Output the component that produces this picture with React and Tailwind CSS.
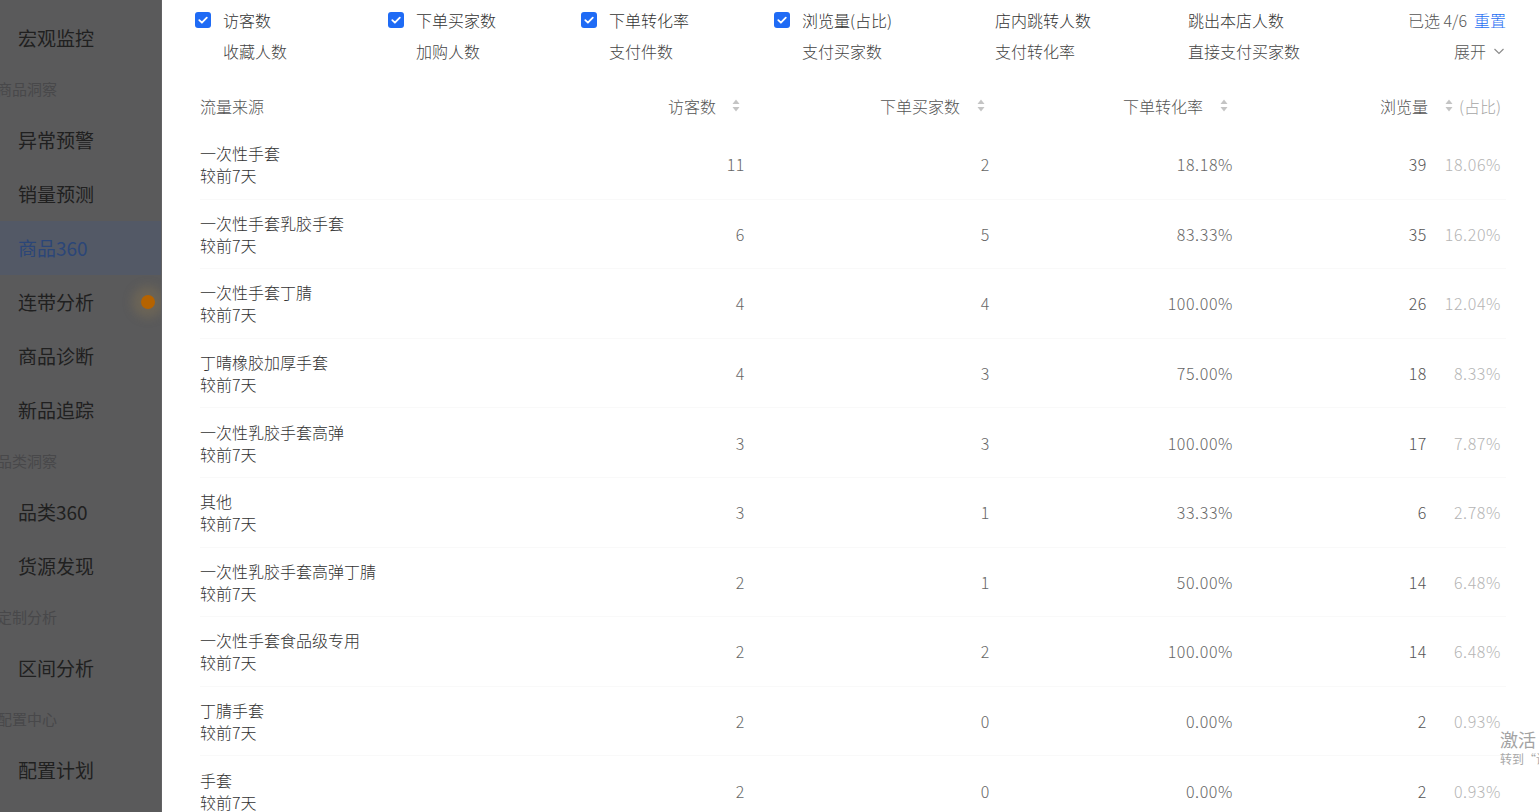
import React from "react";

const FONT = { fontFamily: '"Noto Sans CJK SC", "Noto Sans", sans-serif' };

const sidebar = [
  { t: "item", s: "宏观监控" },
  { t: "label", s: "商品洞察" },
  { t: "item", s: "异常预警" },
  { t: "item", s: "销量预测" },
  { t: "item", s: "商品360", active: true },
  { t: "item", s: "连带分析", dot: true },
  { t: "item", s: "商品诊断" },
  { t: "item", s: "新品追踪" },
  { t: "label", s: "品类洞察" },
  { t: "item", s: "品类360" },
  { t: "item", s: "货源发现" },
  { t: "label", s: "定制分析" },
  { t: "item", s: "区间分析" },
  { t: "label", s: "配置中心" },
  { t: "item", s: "配置计划" },
];

const row1 = [
  { s: "访客数", c: true },
  { s: "下单买家数", c: true },
  { s: "下单转化率", c: true },
  { s: "浏览量(占比)", c: true },
  { s: "店内跳转人数" },
  { s: "跳出本店人数" },
];
const row2 = ["收藏人数", "加购人数", "支付件数", "支付买家数", "支付转化率", "直接支付买家数"];

const data = [
  ["一次性手套", "11", "2", "18.18%", "39", "18.06%"],
  ["一次性手套乳胶手套", "6", "5", "83.33%", "35", "16.20%"],
  ["一次性手套丁腈", "4", "4", "100.00%", "26", "12.04%"],
  ["丁晴橡胶加厚手套", "4", "3", "75.00%", "18", "8.33%"],
  ["一次性乳胶手套高弹", "3", "3", "100.00%", "17", "7.87%"],
  ["其他", "3", "1", "33.33%", "6", "2.78%"],
  ["一次性乳胶手套高弹丁腈", "2", "1", "50.00%", "14", "6.48%"],
  ["一次性手套食品级专用", "2", "2", "100.00%", "14", "6.48%"],
  ["丁腈手套", "2", "0", "0.00%", "2", "0.93%"],
  ["手套", "2", "0", "0.00%", "2", "0.93%"],
];

function Check() {
  return (
    <span className="w-[16px] h-[16px] rounded-[3px] bg-[#1f6bf5] flex items-center justify-center shrink-0">
      <svg width="12" height="12" viewBox="0 0 12 12" fill="none">
        <path d="M2.3 6.2 L4.9 8.7 L9.8 3.6" stroke="#fff" strokeWidth="1.8" strokeLinecap="round" strokeLinejoin="round" />
      </svg>
    </span>
  );
}

function Sort() {
  return (
    <svg width="8" height="13" viewBox="0 0 8 13" className="shrink-0">
      <path d="M4 0.5 L7.5 5 L0.5 5 Z" fill="#c4c4c4" />
      <path d="M4 12.5 L7.5 8 L0.5 8 Z" fill="#c4c4c4" />
    </svg>
  );
}

export default function App() {
  return (
    <div className="w-[1539px] h-[812px] overflow-hidden flex bg-white relative" style={FONT}>
      {/* Sidebar (under mask) */}
      <div className="w-[162px] shrink-0 h-full bg-[#5a5a5b] pt-[11px] relative border-r border-[#636365] overflow-hidden">
        {sidebar.map((it, i) =>
          it.t === "label" ? (
            <div key={i} className="h-[48px] flex items-center -ml-[3px] text-[15px] text-[#48484a] whitespace-nowrap">
              {it.s}
            </div>
          ) : (
            <div
              key={i}
              className={`h-[54px] flex items-center pl-[18px] text-[19px] relative ${
                it.active ? "bg-[#535966] text-[#2b4678]" : "text-[#202020]"
              }`}
            >
              {it.s}
              {it.dot && (
                <span className="absolute left-[141px] top-[20px] w-[14px] h-[14px] rounded-full bg-[#b56300] shadow-[0_0_10px_9px_rgba(140,120,80,0.35)]" />
              )}
            </div>
          )
        )}
      </div>

      {/* Main */}
      <div className="flex-1 pl-[33px] pr-[33px] pt-[5px] font-light">
        {/* filter rows */}
        <div className="flex">
          <div className="flex flex-col">
            <div className="flex h-[30px] items-center">
              {row1.map((r, i) => (
                <div key={i} className="w-[193px] flex items-center">
                  <span className="w-[28px] shrink-0">{r.c && <Check />}</span>
                  <span className="text-[16px] text-[#333] whitespace-nowrap">{r.s}</span>
                </div>
              ))}
            </div>
            <div className="flex h-[31px] items-center">
              {row2.map((s, i) => (
                <div key={i} className="w-[193px] flex items-center">
                  <span className="w-[28px] shrink-0" />
                  <span className="text-[16px] text-[#444] whitespace-nowrap">{s}</span>
                </div>
              ))}
            </div>
          </div>
          <div className="flex-1 flex flex-col items-end">
            <div className="h-[30px] flex items-center text-[16px] text-[#555] whitespace-nowrap">
              已选 4/6<span className="ml-[7px] text-[#1f6ff2]">重置</span>
            </div>
            <div className="h-[31px] flex items-center text-[16px] text-[#555]">
              展开
              <svg width="14" height="14" viewBox="0 0 14 14" className="ml-[6px]" fill="none">
                <path d="M2.5 5 L7 9.5 L11.5 5" stroke="#8c8c8c" strokeWidth="1.2" />
              </svg>
            </div>
          </div>
        </div>

        {/* table */}
        <div className="mt-[15px] pl-[5px]">
          <div className="grid grid-cols-[300px_245px_245px_243px_268px] h-[49px] items-center text-[16px] text-[#555]">
            <div>流量来源</div>
            <div className="flex items-center justify-end pr-[5px]">
              访客数<span className="ml-[16px]"><Sort /></span>
            </div>
            <div className="flex items-center justify-end pr-[5px]">
              下单买家数<span className="ml-[17px]"><Sort /></span>
            </div>
            <div className="flex items-center justify-end pr-[5px]">
              下单转化率<span className="ml-[17px]"><Sort /></span>
            </div>
            <div className="flex items-center justify-end">
              浏览量
              <span className="ml-[17px] flex"><Sort /></span>
              <span className="ml-[6px] text-[#a6a6a6]">(占比)</span>
            </div>
          </div>
          {data.map((r, i) => (
            <div
              key={i}
              className="grid grid-cols-[300px_245px_245px_243px_268px] h-[69.6px] items-center border-b border-[#f9f9f9] text-[16px]"
            >
              <div className="flex flex-col leading-[22px] whitespace-nowrap">
                <span className="text-[#333]">{r[0]}</span>
                <span className="text-[#333]">较前7天</span>
              </div>
              <div className="text-right text-[#666] tracking-[0.6px]">{r[1]}</div>
              <div className="text-right text-[#666] tracking-[0.6px]">{r[2]}</div>
              <div className="text-right text-[#666] tracking-[0.6px]">{r[3]}</div>
              <div className="flex justify-end items-center tracking-[0.6px]">
                <span className="text-[#555]">{r[4]}</span>
                <span className="w-[74px] text-right text-[#b5b5b5]">{r[5]}</span>
              </div>
            </div>
          ))}
        </div>
      </div>

      {/* Windows activation watermark */}
      <div className="absolute left-[1500px] top-[727px] whitespace-nowrap pointer-events-none">
        <div className="text-[18px] leading-[24px] text-[#a3a3a3]">激活 Windows</div>
        <div className="text-[12px] leading-[16px] text-[#a8a8a8]">转到“设置”以激活 Windows。</div>
      </div>
    </div>
  );
}
